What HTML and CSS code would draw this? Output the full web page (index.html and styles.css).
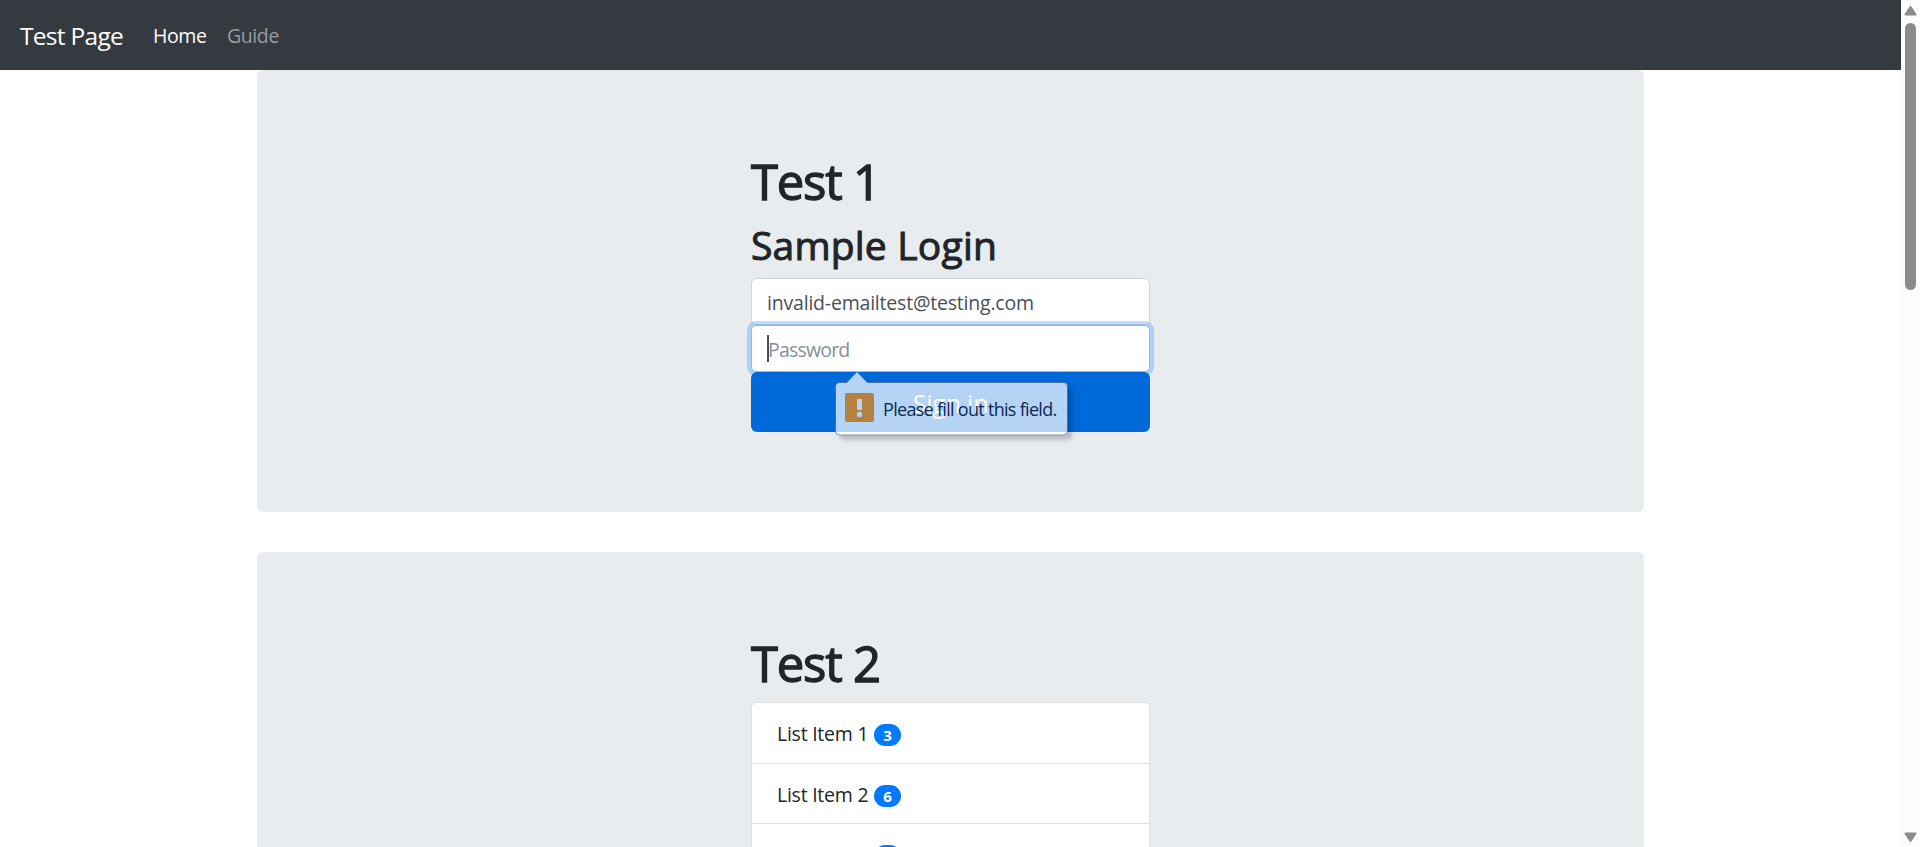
FILE: index.html
```html
<!DOCTYPE html>
<html lang="en">
<head>
<meta charset="utf-8">
<title>Test Page</title>
<link rel="stylesheet" href="styles.css">
</head>
<body>
<div class="viewport">
  <div class="page">
    <nav class="navbar">
      <a class="brand">Test Page</a>
      <a class="nav-link active">Home</a>
      <a class="nav-link">Guide</a>
    </nav>
    <main class="container">
      <section class="jumbotron">
        <div class="column">
          <h1>Test 1</h1>
          <h2>Sample Login</h2>
          <form class="login">
            <div class="field email">invalid-emailtest@testing.com</div>
            <div class="field password"><span class="caret"></span>Password</div>
            <div class="submit"><span>Sign in</span>
              <div class="tooltip">
                <svg class="bubble" width="250" height="80" viewBox="0 0 250 80">
                  <defs>
                    <clipPath id="outside"><path clip-rule="evenodd" d="M0 0H250V80H0ZM0 14H229Q233 14 233 18V63.500Q233 67.500 229 67.500H4Q0 67.500 0 63.500Z"/></clipPath>
                    <filter id="soft"><feGaussianBlur stdDeviation="2"/></filter>
                  </defs>
                  <g clip-path="url(#outside)"><rect x="5" y="19" width="232" height="53" rx="4" opacity=".2" filter="url(#soft)"/></g>
                  <path d="M4.500 14.500H12L22 4L32 14.500H228.500Q232.500 14.500 232.500 18.500V63Q232.500 67 228.500 67H4.500Q.5 67 .5 63V18.500Q.5 14.500 4.500 14.500Z" fill="#fff" fill-opacity=".71"/>
                  <path d="M1 64H232Q231.500 66.500 228.500 66.500H4.500Q1.500 66.500 1 64Z" fill="#fff" fill-opacity=".6"/>
                  <path d="M12 14.500H4.500Q.5 14.500 .5 18.500V63Q.5 67 4.500 67H228.500Q232.500 67 232.500 63V18.500Q232.500 14.500 228.500 14.500H32" fill="none" stroke="#45566b" stroke-opacity=".65"/>
                  <rect x="10" y="25" width="29" height="29" rx="2" fill="#b58140"/>
                  <path d="M22 31H27V42H22Z" fill="#b6d3f5"/><circle cx="24.500" cy="46.500" r="2.700" fill="#b6d3f5"/>
                </svg>
                <span class="message">Please fill out this field.</span>
              </div>
            </div>
          </form>
        </div>
      </section>
      <section class="jumbotron">
        <div class="column">
          <h1>Test 2</h1>
          <ul class="list">
            <li><span>List Item 1</span><b class="badge">3</b></li>
            <li><span>List Item 2</span><b class="badge">6</b></li>
            <li><span>List Item 3</span><b class="badge">9</b></li>
          </ul>
        </div>
      </section>
    </main>
  </div>
  <div class="scrollbar">
    <svg width="13" height="10" viewBox="0 0 13 10"><path d="M6.500 1L11.500 8.500H1.500Z" fill="#8b8b8b" stroke="#8b8b8b" stroke-width="2" stroke-linejoin="round"/></svg>
    <div class="thumb"></div>
    <svg class="down" width="13" height="10" viewBox="0 0 13 10"><path d="M6.500 9L11.500 1.500H1.500Z" fill="#8b8b8b" stroke="#8b8b8b" stroke-width="2" stroke-linejoin="round"/></svg>
  </div>
</div>
</body>
</html>
```

FILE: styles.css
```css
* { box-sizing: border-box; }
body { margin: 0; overflow: hidden; background: #fff; color: #212529; font: 19.5px/30px "Open Sans", sans-serif; letter-spacing: -.4px; }
.viewport { display: flex; height: 847px; overflow: hidden; }
.page { flex: 1; height: 847px; overflow: hidden; }
.navbar { height: 70px; padding: 1px 20px 0; display: flex; align-items: center; background: #343a40; color: #fff; }
.brand { font-size: 24.5px; letter-spacing: -.7px; width: 133px; white-space: nowrap; }
.nav-link { width: 74px; color: #9a9da0; }
.nav-link.active { color: #fff; }
.container { width: 1387px; margin: 0 auto; }
.jumbotron { height: 442px; padding: 80px 0; margin-bottom: 40px; border-radius: 6px; background: #e9ecef; }
.column { width: 399px; margin-left: 494px; }
h1, h2 { margin: 0 0 10px; font-weight: 500; white-space: nowrap; }
h1 { font-size: 49px; line-height: 62px; height: 60px; letter-spacing: -1.2px; -webkit-text-stroke: 1.3px #212529; }
h2 { font-size: 39px; line-height: 50px; height: 48px; letter-spacing: .2px; -webkit-text-stroke: 1px #212529; }
.login { margin: 0; }
.field { display: flex; align-items: center; height: 47px; padding: 2px 15px 0 15px; border: 1px solid #ced4da; border-radius: 5px; background: #fff; color: #495057; }
.email { letter-spacing: -.2px; }
.password { position: relative; color: #868e96; letter-spacing: -.8px; border-color: #80bdff; box-shadow: 0 0 0 4px rgba(0, 123, 255, .25); }
.caret { width: 2px; height: 27px; margin: -2px -1px 0 0; background: #495057; }
.submit { position: relative; display: flex; justify-content: center; height: 60px; padding-top: 16px; border-radius: 6px; background: #0069d9; color: #fff; font-size: 25px; letter-spacing: -.2px; }
.tooltip { position: absolute; left: 84px; top: -4px; width: 250px; height: 80px; }
.bubble { display: block; }
.message { position: absolute; left: 48px; top: 26px; color: #0b2a52; font-size: 18px; letter-spacing: -.7px; white-space: nowrap; }
.list { list-style: none; margin: 0; padding: 0; border: 1px solid #dfdfdf; border-radius: 5px; background: #fff; }
.list li { display: flex; height: 60.5px; padding: 16px 25px 0; border-bottom: 1px solid #dfdfdf; letter-spacing: -.25px; }
.list span { width: 97px; white-space: nowrap; }
.badge { width: 27px; height: 22px; margin-top: 5px; border-radius: 11px; background: #007bff; color: #fff; font-size: 15px; line-height: 23px; font-weight: 700; text-align: center; letter-spacing: 0; }
.scrollbar { display: flex; flex-direction: column; width: 19px; height: 847px; padding: 6px 3px 5px; background: #fcfcfc; }
.scrollbar svg { display: block; }
.thumb { width: 11px; height: 267px; margin: 7px 1px 0; border-radius: 6px; background: #8b8b8b; }
.scrollbar .down { margin-top: auto; }
```
